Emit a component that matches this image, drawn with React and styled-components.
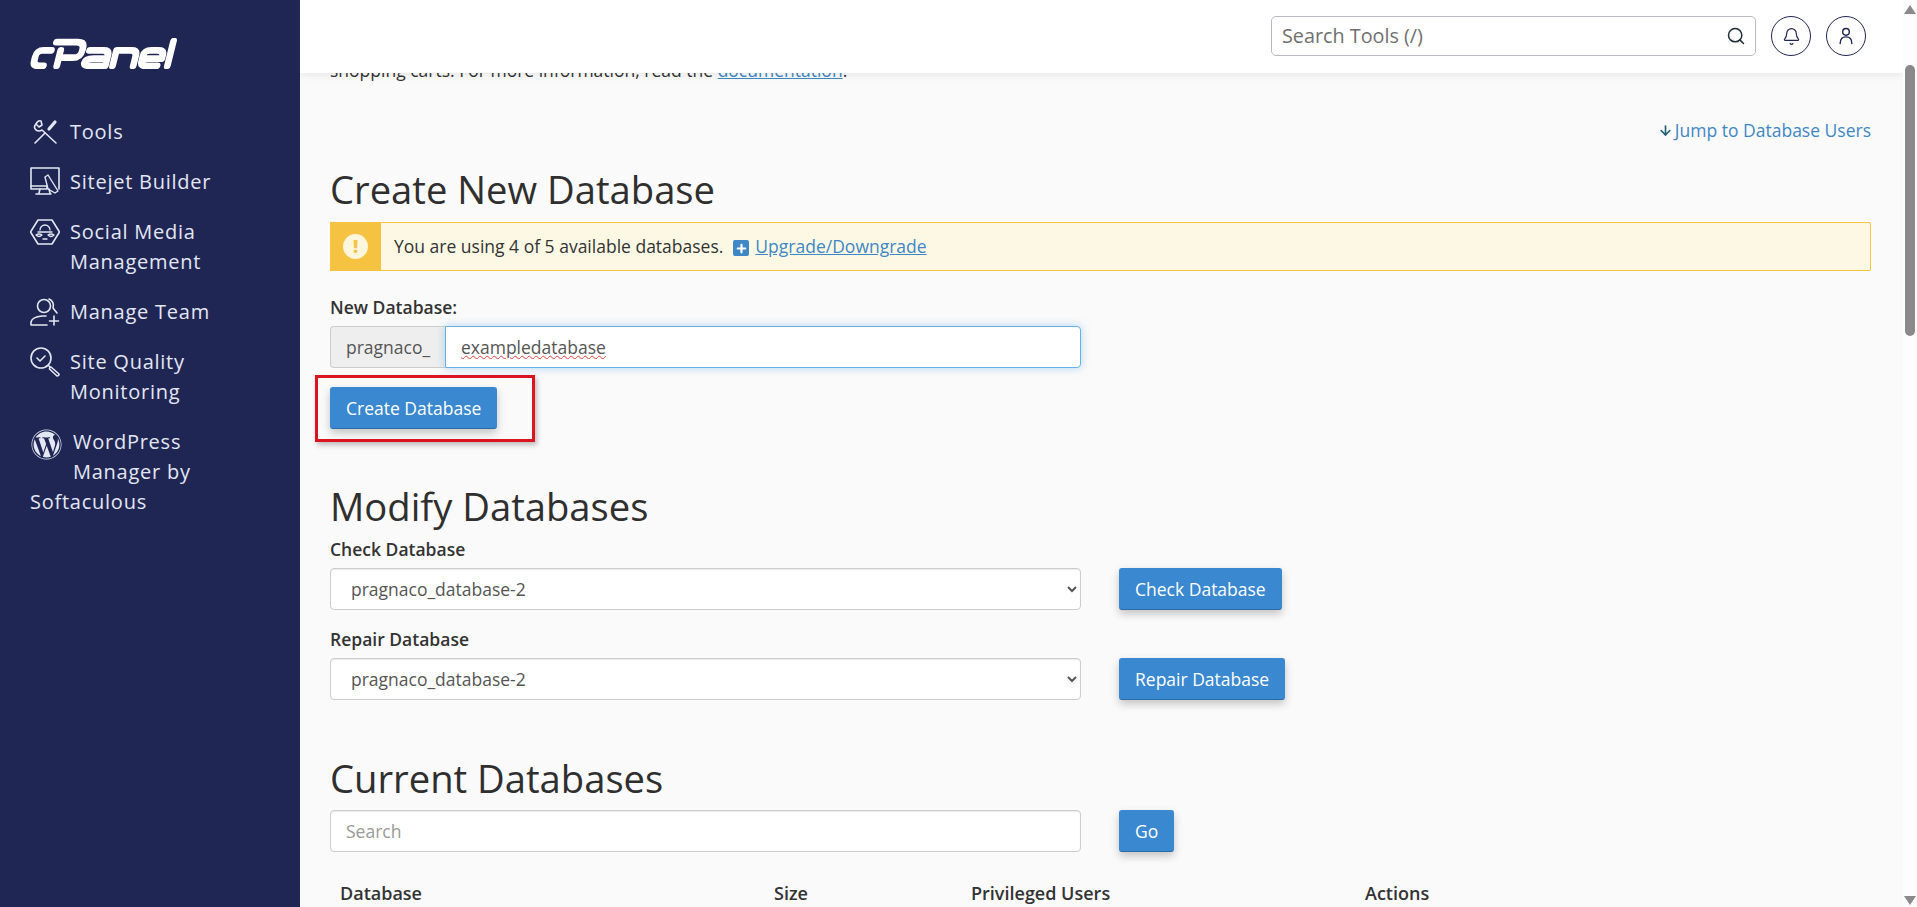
import styled, { createGlobalStyle } from "styled-components";
import { Bell, Search, Plus, ArrowDown } from "lucide-react";
import { FaWordpress } from "react-icons/fa";

const GlobalStyle = createGlobalStyle`
  html, body, #root {
    margin: 0;
    height: 100%;
  }
  body {
    font-family: "Open Sans", "Liberation Sans", sans-serif;
    font-size: 17.5px;
    line-height: 24px;
    color: #333;
    background: #fafafa;
    overflow: hidden;
  }
  * {
    box-sizing: border-box;
  }
`;

const Page = styled.div`
  display: flex;
  height: 907px;
  overflow: hidden;
`;

const Sidebar = styled.aside`
  flex: 0 0 300px;
  background: #202653;
  padding: 38px 0 0 30px;
  color: #e3e7f3;
`;

const LogoWrap = styled.div`
  height: 31px;
  margin-bottom: 48px;
`;

const Nav = styled.nav`
  display: flex;
  flex-direction: column;
  gap: 20px;
  width: 220px;
`;

const NavItem = styled.a`
  display: flex;
  gap: 10px;
  font-size: 20px;
  line-height: 30px;
  letter-spacing: 0.75px;
  color: #e3e7f3;
`;

const WrapItem = styled.a`
  display: block;
  font-size: 20px;
  line-height: 30px;
  letter-spacing: 0.75px;
  color: #e3e7f3;
  width: 180px;
  svg {
    float: left;
    margin: 2px 11px 0 1px;
  }
`;

const IconBox = styled.svg`
  flex: 0 0 30px;
  width: 30px;
  height: 30px;
  fill: none;
  stroke: #e3e7f3;
  stroke-width: 1.6;
  stroke-linecap: round;
  stroke-linejoin: round;
`;

const Main = styled.main`
  flex: 1;
  position: relative;
  overflow: hidden;
  min-width: 0;
`;

const Header = styled.header`
  position: absolute;
  top: 0;
  left: 0;
  right: 0;
  height: 73px;
  background: #fff;
  box-shadow: 0 2px 8px rgba(0, 0, 0, 0.08);
  display: flex;
  justify-content: flex-end;
  align-items: flex-start;
  gap: 15px;
  padding: 16px 37px 0 0;
  z-index: 2;
`;

const SearchBox = styled.div`
  width: 485px;
  height: 40px;
  border: 1px solid #b9b9c4;
  border-radius: 5px;
  display: flex;
  align-items: center;
  justify-content: space-between;
  padding: 0 9px 0 10px;
  color: #1d2b3a;
`;

const SearchInput = styled.input`
  flex: 1;
  border: 0;
  outline: 0;
  background: none;
  padding: 0 0 2px;
  font: 19.8px "Open Sans", sans-serif;
  &::placeholder {
    color: #6f6f6f;
    opacity: 1;
  }
`;

const RoundButton = styled.button`
  width: 40px;
  height: 40px;
  border-radius: 50%;
  border: 1px solid #202653;
  background: #fff;
  padding: 0;
  color: #202653;
  display: flex;
  align-items: center;
  justify-content: center;
`;

const Content = styled.div`
  padding: 34px 32px 0 30px;
`;

const Intro = styled.p`
  margin: 0;
  white-space: nowrap;
`;

const Link = styled.a`
  color: #3f87c5;
  text-decoration: ${(p) => (p.$plain ? "none" : "underline")};
`;

const JumpRow = styled.div`
  display: flex;
  justify-content: flex-end;
  align-items: center;
  margin-top: 36px;
  color: #1f5f73;
  svg {
    margin-right: 2px;
  }
`;

const Heading = styled.h2`
  margin: ${(p) => p.$top}px 0 0;
  font-size: 38.2px;
  line-height: 40px;
  font-weight: 500;
  color: #2f2f2f;
`;

const Alert = styled.div`
  display: flex;
  align-items: center;
  height: 49px;
  margin-top: 13px;
  padding-bottom: 2px;
  background: #fcf8e3;
  border: 1px solid #f5c242;
  border-radius: 2px;
`;

const AlertMark = styled.div`
  flex: 0 0 51px;
  align-self: stretch;
  margin: -1px 0 -3px -1px;
  background: #f5c242;
  display: flex;
  align-items: center;
  justify-content: center;
`;

const AlertDot = styled.span`
  width: 25px;
  height: 25px;
  border-radius: 50%;
  background: #fdf6dc;
  color: #f5c242;
  font-weight: 800;
  font-size: 18px;
  line-height: 25px;
  text-align: center;
`;

const AlertText = styled.span`
  margin-left: 13px;
`;

const PlusSquare = styled.span`
  display: inline-flex;
  align-items: center;
  justify-content: center;
  width: 16px;
  height: 16px;
  margin: 0 6px 0 10px;
  border-radius: 2px;
  background: #3f87c5;
  color: #fff;
  vertical-align: -2px;
`;

const Label = styled.label`
  display: block;
  margin-top: ${(p) => p.$top}px;
  font-weight: 600;
  color: #333;
`;

const InputGroup = styled.div`
  display: flex;
  width: 751px;
  height: 42px;
  margin-top: 7px;
`;

const Addon = styled.span`
  flex: 0 0 115px;
  display: flex;
  align-items: center;
  padding-left: 15px;
  background: #eee;
  border: 1px solid #ccc;
  border-right: 0;
  border-radius: 4px 0 0 4px;
  color: #555;
`;

const TextField = styled.input`
  flex: 1;
  border: 1px solid #66afe9;
  border-radius: 0 4px 4px 0;
  box-shadow: 0 0 8px rgba(102, 175, 233, 0.5);
  outline: 0;
  background: #fff;
  padding: 0 15px;
  font: 17.5px "Open Sans", sans-serif;
  color: #555;
  text-decoration: underline wavy #e04040 1px;
`;

const Button = styled.button`
  height: 42px;
  padding: 0 15px;
  background: #3a88cf;
  border: 1px solid #3a88cf;
  border-bottom-color: #2c6ba5;
  border-radius: 3px;
  box-shadow: 0 4px 8px rgba(0, 0, 0, 0.22);
  color: #fff;
  font: 17.5px "Open Sans", sans-serif;
  white-space: nowrap;
`;

const Highlight = styled.div`
  width: 220px;
  height: 67px;
  margin: 7px 0 0 -15px;
  padding: 9px 0 0 12px;
  border: 3px solid #dc1420;
  box-shadow: 2px 3px 5px rgba(0, 0, 0, 0.25);
`;

const FieldRow = styled.div`
  display: flex;
  align-items: center;
  gap: 38px;
  margin-top: ${(p) => p.$top || 0}px;
`;

const Select = styled.select`
  width: 751px;
  height: 42px;
  padding: 0 16px;
  background: #fff;
  border: 1px solid #ccc;
  border-radius: 4px;
  box-shadow: inset 0 1px 1px rgba(0, 0, 0, 0.08);
  font: 17.5px "Open Sans", sans-serif;
  color: #555;
`;

const PlainField = styled.input`
  width: 751px;
  height: 42px;
  padding: 0 15px;
  background: #fff;
  border: 1px solid #ccc;
  border-radius: 4px;
  box-shadow: inset 0 1px 1px rgba(0, 0, 0, 0.08);
  font: 17.5px "Open Sans", sans-serif;
  &::placeholder {
    color: #999;
    opacity: 1;
  }
`;

const TableHead = styled.div`
  display: grid;
  grid-template-columns: 434px 197px 394px 1fr;
  margin-top: 29px;
  padding-left: 10px;
  font-size: 18px;
  font-weight: 600;
`;

const ScrollTrack = styled.div`
  flex: 0 0 14px;
  background: #fdfdfd;
  position: relative;
  display: flex;
  flex-direction: column;
  justify-content: space-between;
  align-items: center;
  padding: 5px 0 2px;
`;

const Arrow = styled.span`
  width: 0;
  height: 0;
  border-left: 6px solid transparent;
  border-right: 6px solid transparent;
  ${(p) => (p.$down ? "border-top: 9px solid #8a8a8a;" : "border-bottom: 9px solid #8a8a8a;")}
`;

const Thumb = styled.div`
  position: absolute;
  top: 65px;
  left: 2px;
  width: 10px;
  height: 271px;
  background: #8a8a8a;
  border-radius: 5px;
`;

const Logo = () => (
  <svg width="148" height="31" viewBox="4 0 140 30" fill="none" stroke="#fff" strokeWidth="6.5" strokeLinecap="round" strokeLinejoin="round">
    <g transform="skewX(-14) translate(8 0)">
      <path d="M18 12H10Q4 12 4 18V22Q4 27 10 27H14" />
      <path d="M21 4H41Q48 4 48 10V12Q48 19 41 19H30M27 12V27" />
      <path d="M55 12H68Q74 12 74 17V27H60Q53 27 53 23.500Q53 20 60 20H74" />
      <path d="M81 27V12H95Q101 12 101 17V27" />
      <path d="M108 20H127V17Q127 12 121 12H114Q108 12 108 17V22Q108 27 114 27H124" />
      <path d="M134 27V3" />
    </g>
  </svg>
);

const ToolsIcon = () => (
  <IconBox viewBox="0 0 30 30" strokeWidth="2">
    <path d="M6 7 Q3 10 6 13 Q9 15 12 13 L26 26" />
    <path d="M6 7 L9 10 L12 8 L11 4 Q8 3 6 7" />
    <path d="M5 26 L15 16" />
    <path d="M19 12 L25 5" strokeWidth="3.200" />
  </IconBox>
);

const SitejetIcon = () => (
  <IconBox viewBox="0 0 30 30">
    <path d="M1 19V1H29V22" />
    <path d="M1 19H17V22H1V19" />
    <path d="M10 22L9 26M19 22L20 26M6 27H21" />
    <path d="M15 10L18 8L28 24L25 26L18 22Z" strokeWidth="1.4" />
  </IconBox>
);

const SocialIcon = () => (
  <IconBox viewBox="0 0 30 30">
    <path d="M8 3H22L29.500 15L22 27H8L0.500 15Z" />
    <path d="M10 13A5 5 0 0 1 20 13M8 15H22M6 18Q9 16 12 18Q9 21 6 18ZM18 18Q21 16 24 18Q21 21 18 18ZM13 22H17" strokeWidth="1.3" />
  </IconBox>
);

const TeamIcon = () => (
  <IconBox viewBox="0 0 30 30">
    <circle cx="14" cy="9" r="6.500" />
    <path d="M19 2A7 7 0 0 1 23 11L27 16M1 28V25Q2 20 12 19H16M1 28H17M24 19V28M19.500 24H28.500" />
  </IconBox>
);

const QualityIcon = () => (
  <IconBox viewBox="0 0 30 30">
    <circle cx="11" cy="11" r="10" />
    <path d="M7 11L10 14L15 9" />
    <path d="M18.500 18.500L20 20M21 20L29 27Q29 29 27 29L19.500 22Q19.500 20 21 20Z" />
  </IconBox>
);

const UserIcon = () => (
  <svg width="20" height="20" viewBox="0 0 24 24" fill="none" stroke="currentColor" strokeWidth="1.7" strokeLinecap="round">
    <circle cx="12" cy="7" r="4" />
    <path d="M5 21C5 15 8 13 12 13S19 15 19 21" />
  </svg>
);

export default function App() {
  return (
    <Page>
      <GlobalStyle />
      <Sidebar>
        <LogoWrap>
          <Logo />
        </LogoWrap>
        <Nav>
          <NavItem>
            <ToolsIcon />
            Tools
          </NavItem>
          <NavItem>
            <SitejetIcon />
            Sitejet Builder
          </NavItem>
          <NavItem>
            <SocialIcon />
            <span>
              Social Media
              <br />
              Management
            </span>
          </NavItem>
          <NavItem>
            <TeamIcon />
            Manage Team
          </NavItem>
          <NavItem>
            <QualityIcon />
            <span>
              Site Quality
              <br />
              Monitoring
            </span>
          </NavItem>
          <WrapItem>
            <FaWordpress size={31} />
            WordPress Manager by Softaculous
          </WrapItem>
        </Nav>
      </Sidebar>
      <Main>
        <Header>
          <SearchBox>
            <SearchInput placeholder="Search Tools (/)" />
            <Search size={20} strokeWidth={1.8} />
          </SearchBox>
          <RoundButton>
            <Bell size={19} strokeWidth={1.5} />
          </RoundButton>
          <RoundButton>
            <UserIcon />
          </RoundButton>
        </Header>
        <Content>
          <Intro>
            Databases allow you to store large amounts of information in an easy-to-access manner, and are most commonly used by web applications such as bulletin boards and
            <br />
            shopping carts. For more information, read the <Link href="#">documentation</Link>.
          </Intro>
          <JumpRow>
            <ArrowDown size={15} strokeWidth={2.6} />
            <Link href="#" $plain>
              Jump to Database Users
            </Link>
          </JumpRow>
          <Heading $top={27}>Create New Database</Heading>
          <Alert>
            <AlertMark>
              <AlertDot>!</AlertDot>
            </AlertMark>
            <AlertText>
              You are using 4 of 5 available databases.
              <PlusSquare>
                <Plus size={13} strokeWidth={4} />
              </PlusSquare>
              <Link href="#">Upgrade/Downgrade</Link>
            </AlertText>
          </Alert>
          <Label $top={24}>New Database:</Label>
          <InputGroup>
            <Addon>pragnaco_</Addon>
            <TextField defaultValue="exampledatabase" />
          </InputGroup>
          <Highlight>
            <Button>Create Database</Button>
          </Highlight>
          <Heading $top={44}>Modify Databases</Heading>
          <Label $top={11}>Check Database</Label>
          <FieldRow $top={7}>
            <Select defaultValue="pragnaco_database-2">
              <option>pragnaco_database-2</option>
            </Select>
            <Button>Check Database</Button>
          </FieldRow>
          <Label $top={17}>Repair Database</Label>
          <FieldRow $top={7}>
            <Select defaultValue="pragnaco_database-2">
              <option>pragnaco_database-2</option>
            </Select>
            <Button>Repair Database</Button>
          </FieldRow>
          <Heading $top={58}>Current Databases</Heading>
          <FieldRow $top={12}>
            <PlainField placeholder="Search" />
            <Button>Go</Button>
          </FieldRow>
          <TableHead>
            <span>Database</span>
            <span>Size</span>
            <span>Privileged Users</span>
            <span>Actions</span>
          </TableHead>
        </Content>
      </Main>
      <ScrollTrack>
        <Arrow />
        <Thumb />
        <Arrow $down />
      </ScrollTrack>
    </Page>
  );
}
